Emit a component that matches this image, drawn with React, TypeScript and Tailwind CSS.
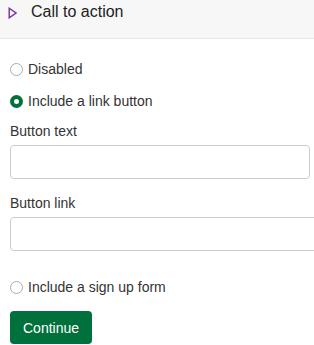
import { useState } from 'react';

type Choice = 'disabled' | 'link' | 'signup';

function Radio({ checked, label, onSelect }: { checked: boolean; label: string; onSelect: () => void }) {
  return (
    <label className="flex h-5 cursor-pointer items-center gap-[5px]" onClick={onSelect}>
      {checked ? (
        <span className="flex h-[13px] w-[13px] items-center justify-center rounded-full bg-[#00703c]">
          <span className="h-[5px] w-[5px] rounded-full bg-white" />
        </span>
      ) : (
        <span className="h-[13px] w-[13px] rounded-full border border-[#ababab] bg-white" />
      )}
      <span>{label}</span>
    </label>
  );
}

export default function App() {
  const [choice, setChoice] = useState<Choice>('link');

  return (
    <div className="min-h-[345px] w-[314px] overflow-hidden bg-white font-['Liberation_Sans',Arial,sans-serif] text-[14px] leading-5 text-[#333]">
      <div className="flex h-[39px] items-start gap-[14px] border-b border-[#e6e6e6] bg-[#f7f7f7] pl-[8px] pt-[2px]">
        <svg width="9" height="12" viewBox="0 0 9 12" className="mt-[5px]">
          <path d="M1.2 1.2 L8 6 L1.2 10.8 Z" fill="none" stroke="#7b2aa8" strokeWidth="1.4" strokeLinejoin="miter" />
        </svg>
        <span className="text-[16px] leading-5 text-[#222]">Call to action</span>
      </div>

      <div className="flex flex-col px-[10px]">
        <div className="mt-[20px]">
          <Radio checked={choice === 'disabled'} label="Disabled" onSelect={() => setChoice('disabled')} />
        </div>
        <div className="mt-[12px]">
          <Radio checked={choice === 'link'} label="Include a link button" onSelect={() => setChoice('link')} />
        </div>

        <div className="mt-[10px] h-5">Button text</div>
        <input
          type="text"
          className="mt-[4px] h-[34px] w-[300px] rounded-[4px] border border-[#ccc] px-2 outline-none"
        />

        <div className="mt-[14px] h-5">Button link</div>
        <input
          type="text"
          className="mt-[4px] h-[34px] w-[320px] shrink-0 rounded-[4px] border border-[#ccc] px-2 outline-none"
        />

        <div className="mt-[26px]">
          <Radio checked={choice === 'signup'} label="Include a sign up form" onSelect={() => setChoice('signup')} />
        </div>

        <div className="mt-[14px]">
          <button
            type="button"
            className="h-[33px] rounded-[4px] bg-[#00703c] px-[13px] text-[14px] text-white"
          >
            Continue
          </button>
        </div>
      </div>
    </div>
  );
}
